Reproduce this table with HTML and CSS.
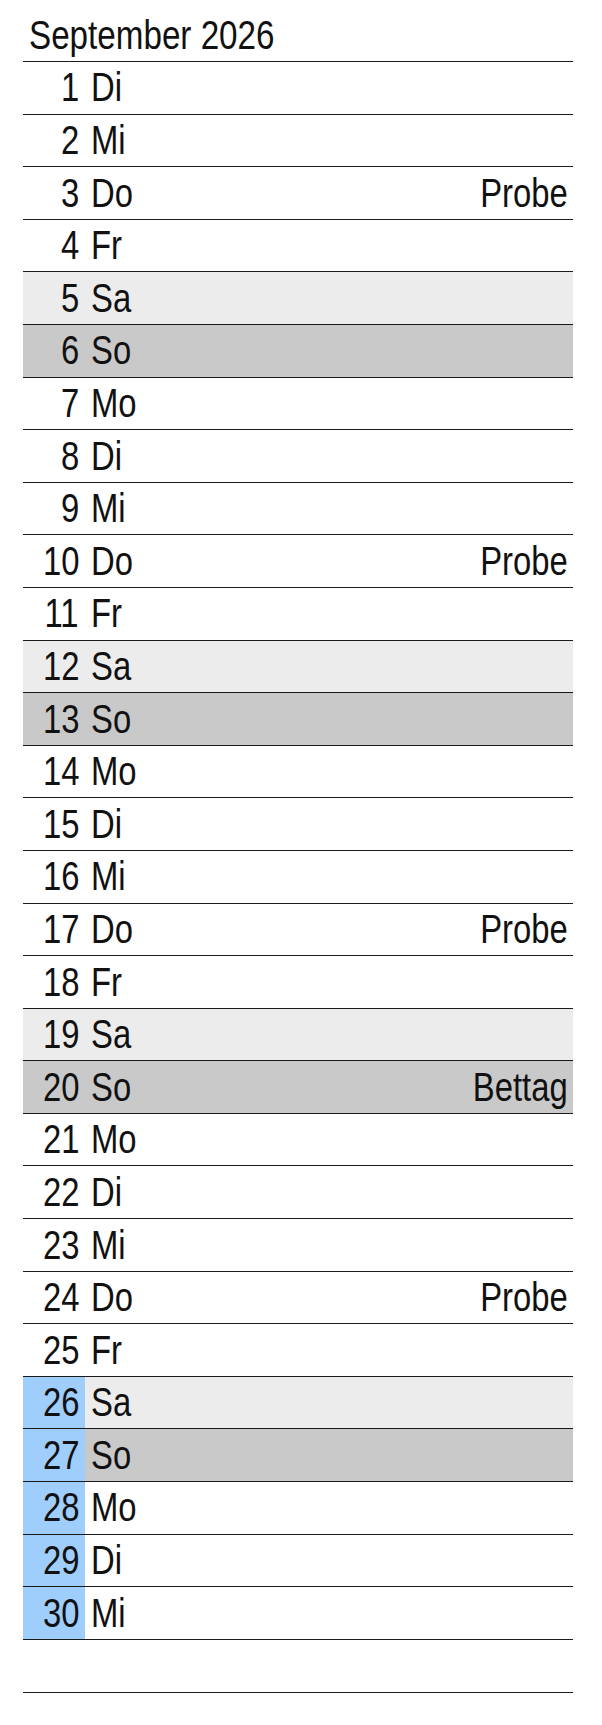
FILE: index.html
```html
<!DOCTYPE html>
<html lang="de">
<head>
<meta charset="utf-8">
<title>September 2026</title>
<link rel="stylesheet" href="styles.css">
</head>
<body>
<div class="cal">
  <div class="title"><span class="tx">September 2026</span></div>
  <div class="row"><span class="num"><span class="tx">1</span></span><span class="day"><span class="tx">Di</span></span><span class="ev"></span></div>
  <div class="row"><span class="num"><span class="tx">2</span></span><span class="day"><span class="tx">Mi</span></span><span class="ev"></span></div>
  <div class="row"><span class="num"><span class="tx">3</span></span><span class="day"><span class="tx">Do</span></span><span class="ev"><span class="tx">Probe</span></span></div>
  <div class="row"><span class="num"><span class="tx">4</span></span><span class="day"><span class="tx">Fr</span></span><span class="ev"></span></div>
  <div class="row sat"><span class="num"><span class="tx">5</span></span><span class="day"><span class="tx">Sa</span></span><span class="ev"></span></div>
  <div class="row sun"><span class="num"><span class="tx">6</span></span><span class="day"><span class="tx">So</span></span><span class="ev"></span></div>
  <div class="row"><span class="num"><span class="tx">7</span></span><span class="day"><span class="tx">Mo</span></span><span class="ev"></span></div>
  <div class="row"><span class="num"><span class="tx">8</span></span><span class="day"><span class="tx">Di</span></span><span class="ev"></span></div>
  <div class="row"><span class="num"><span class="tx">9</span></span><span class="day"><span class="tx">Mi</span></span><span class="ev"></span></div>
  <div class="row"><span class="num"><span class="tx">10</span></span><span class="day"><span class="tx">Do</span></span><span class="ev"><span class="tx">Probe</span></span></div>
  <div class="row"><span class="num"><span class="tx">11</span></span><span class="day"><span class="tx">Fr</span></span><span class="ev"></span></div>
  <div class="row sat"><span class="num"><span class="tx">12</span></span><span class="day"><span class="tx">Sa</span></span><span class="ev"></span></div>
  <div class="row sun"><span class="num"><span class="tx">13</span></span><span class="day"><span class="tx">So</span></span><span class="ev"></span></div>
  <div class="row"><span class="num"><span class="tx">14</span></span><span class="day"><span class="tx">Mo</span></span><span class="ev"></span></div>
  <div class="row"><span class="num"><span class="tx">15</span></span><span class="day"><span class="tx">Di</span></span><span class="ev"></span></div>
  <div class="row"><span class="num"><span class="tx">16</span></span><span class="day"><span class="tx">Mi</span></span><span class="ev"></span></div>
  <div class="row"><span class="num"><span class="tx">17</span></span><span class="day"><span class="tx">Do</span></span><span class="ev"><span class="tx">Probe</span></span></div>
  <div class="row"><span class="num"><span class="tx">18</span></span><span class="day"><span class="tx">Fr</span></span><span class="ev"></span></div>
  <div class="row sat"><span class="num"><span class="tx">19</span></span><span class="day"><span class="tx">Sa</span></span><span class="ev"></span></div>
  <div class="row sun"><span class="num"><span class="tx">20</span></span><span class="day"><span class="tx">So</span></span><span class="ev"><span class="tx">Bettag</span></span></div>
  <div class="row"><span class="num"><span class="tx">21</span></span><span class="day"><span class="tx">Mo</span></span><span class="ev"></span></div>
  <div class="row"><span class="num"><span class="tx">22</span></span><span class="day"><span class="tx">Di</span></span><span class="ev"></span></div>
  <div class="row"><span class="num"><span class="tx">23</span></span><span class="day"><span class="tx">Mi</span></span><span class="ev"></span></div>
  <div class="row"><span class="num"><span class="tx">24</span></span><span class="day"><span class="tx">Do</span></span><span class="ev"><span class="tx">Probe</span></span></div>
  <div class="row"><span class="num"><span class="tx">25</span></span><span class="day"><span class="tx">Fr</span></span><span class="ev"></span></div>
  <div class="row sat"><span class="num hl"><span class="tx">26</span></span><span class="day"><span class="tx">Sa</span></span><span class="ev"></span></div>
  <div class="row sun"><span class="num hl"><span class="tx">27</span></span><span class="day"><span class="tx">So</span></span><span class="ev"></span></div>
  <div class="row"><span class="num hl"><span class="tx">28</span></span><span class="day"><span class="tx">Mo</span></span><span class="ev"></span></div>
  <div class="row"><span class="num hl"><span class="tx">29</span></span><span class="day"><span class="tx">Di</span></span><span class="ev"></span></div>
  <div class="row"><span class="num hl"><span class="tx">30</span></span><span class="day"><span class="tx">Mi</span></span><span class="ev"></span></div>
  <div class="row empty"></div>
</div>
</body>
</html>
```
FILE: styles.css
```css
html, body {
  margin: 0;
  padding: 0;
  background: #fff;
}

body {
  font-family: "Liberation Sans", Arial, sans-serif;
  color: #111;
}

.cal {
  width: 550px;
  margin-left: 23px;
  padding-top: 13px;
}

.tx {
  display: inline-block;
  transform: scaleX(0.82);
  transform-origin: left center;
  white-space: nowrap;
}

.title {
  font-size: 40px;
  line-height: 44.7px;
  padding: 0 0 3.3px 6px;
  border-bottom: 1px solid #1a1a1a;
}

.title .tx {
  transform: scaleX(0.83);
}

.row {
  display: flex;
  align-items: center;
  height: 52.6px;
  box-sizing: border-box;
  border-bottom: 1px solid #1a1a1a;
  font-size: 40px;
  line-height: 44.7px;
}

.row.sat {
  background: #ececec;
}

.row.sun {
  background: #c9c9c9;
}

.num {
  width: 62px;
  flex: none;
  box-sizing: border-box;
  padding-right: 6px;
  align-self: stretch;
  display: flex;
  align-items: center;
  justify-content: flex-end;
}

.num .tx,
.ev .tx {
  transform-origin: right center;
}

.num.hl {
  background: #9fcdfc;
}

.day {
  padding-left: 6px;
  flex: none;
}

.ev {
  flex: 1;
  text-align: right;
  padding-right: 5px;
}

.row.empty {
  height: 53px;
}
```
